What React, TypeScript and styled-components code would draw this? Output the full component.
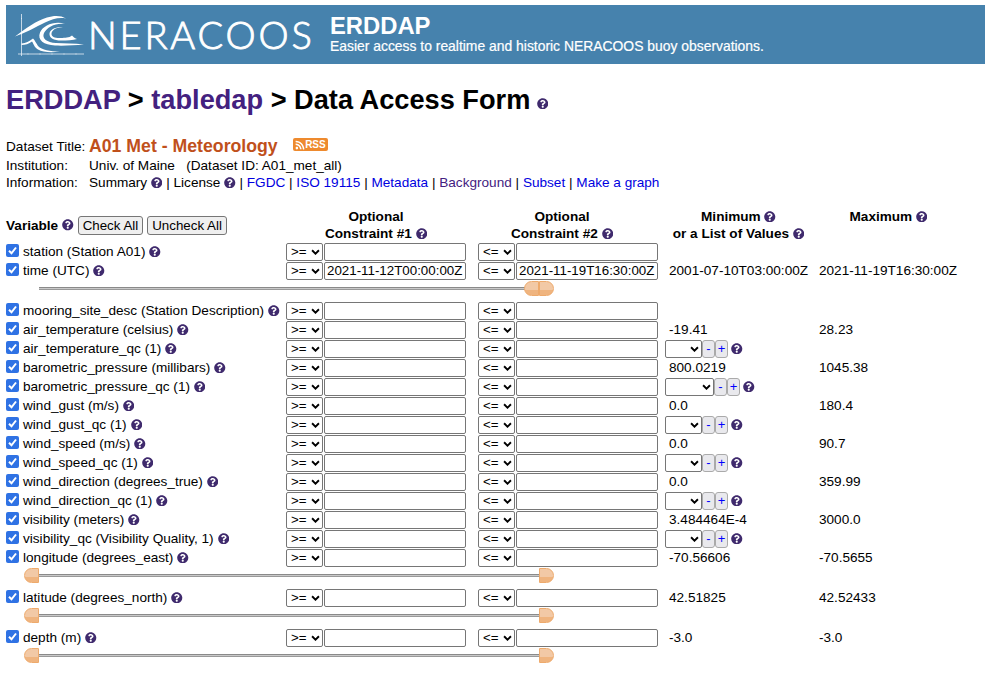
import React from 'react';
import styled, {createGlobalStyle} from 'styled-components';
import {FaQuestionCircle, FaRss} from 'react-icons/fa';

const GlobalStyle = createGlobalStyle`
  body {
    margin: 0;
    background: #fff;
    color: #000;
    font-family: "Liberation Sans", Arial, sans-serif;
    font-size: 13.6px;
  }
`

interface Variable {
    name: string;
    min?: string;
    max?: string;
    first?: string;
    second?: string;
    listWidth?: number;
    slider?: 'full' | 'end';
}

const variables: Variable[] = [
    {name: 'station (Station A01)'},
    {name: 'time (UTC)', min: '2001-07-10T03:00:00Z', max: '2021-11-19T16:30:00Z', first: '2021-11-12T00:00:00Z', second: '2021-11-19T16:30:00Z', slider: 'end'},
    {name: 'mooring_site_desc (Station Description)'},
    {name: 'air_temperature (celsius)', min: '-19.41', max: '28.23'},
    {name: 'air_temperature_qc (1)', listWidth: 37},
    {name: 'barometric_pressure (millibars)', min: '800.0219', max: '1045.38'},
    {name: 'barometric_pressure_qc (1)', listWidth: 49},
    {name: 'wind_gust (m/s)', min: '0.0', max: '180.4'},
    {name: 'wind_gust_qc (1)', listWidth: 37},
    {name: 'wind_speed (m/s)', min: '0.0', max: '90.7'},
    {name: 'wind_speed_qc (1)', listWidth: 37},
    {name: 'wind_direction (degrees_true)', min: '0.0', max: '359.99'},
    {name: 'wind_direction_qc (1)', listWidth: 37},
    {name: 'visibility (meters)', min: '3.484464E-4', max: '3000.0'},
    {name: 'visibility_qc (Visibility Quality, 1)', listWidth: 37},
    {name: 'longitude (degrees_east)', min: '-70.56606', max: '-70.5655', slider: 'full'},
    {name: 'latitude (degrees_north)', min: '42.51825', max: '42.52433', slider: 'full'},
    {name: 'depth (m)', min: '-3.0', max: '-3.0', slider: 'full'},
];

const Help = () => <HelpIcon><FaQuestionCircle/></HelpIcon>;

const Logo = () => (
    <LogoSvg viewBox="0 0 72 46" fill="none">
        <path d="M7.5 1V43M4 41H70" stroke="#e4eef5" strokeWidth="0.8"/>
        <path d="M7 5.5h1M7 21h1M14 40.5v1M26 40.5v1M38 40.5v1M50 40.5v1M62 40.5v1" stroke="#e4eef5" strokeWidth="0.8"/>
        <path d="M1 23.5C12 15 22 8 33 4.5C40 2.3 47 2.3 52 5.5C45 4 38 6 31 9.5C22 14 11 20 1 23.5Z" fill="#fff"/>
        <path d="M51 11C42 9.5 33 14 30 20C27.5 25.5 33 29.5 42 30C50 30.5 60 30 70 31.5C60 32.2 50 33 41 32.5C30 32 23 27 26 19.5C29 12.5 41 7.5 51 11Z" fill="#fff"/>
        <path d="M49 14.5C42 14 38 17 37.500 20.500C37 24 42 25.500 47 25C51 24.600 55 25 58 22.500C59 23.500 60 25 63 26C59 27 53 27.500 47 27.500C40 27.500 35 25 35.500 20.500C36 16.500 42 13.500 49 14.500Z" fill="#fff"/>
        <path d="M7.500 30.500C12 30 15 28.500 19 25.500C21 27.500 22 30 24 33C28 37 36 38.500 46 38.500C38 39.800 29 39.500 24 36.500C20 34 19.500 30.500 18 28.500C15 31 11 32 7.500 32Z" fill="#fff"/>
    </LogoSvg>
);

const RangeSlider = ({end}: {end?: boolean}) => (
    <SliderRow>
        <SliderTrack>
            <Thumb $side="left" $meet={end}/>
            <Thumb $side="right" $meet={end}/>
        </SliderTrack>
    </SliderRow>
);

const Constraint = ({op, value, $last}: {op: string; value?: string; $last?: boolean}) => (
    <ConstraintCell $last={$last}>
        <OpSelect defaultValue={op}>
            <option>{op}</option>
        </OpSelect>
        <ConstraintInput type="text" defaultValue={value ?? ''} readOnly/>
    </ConstraintCell>
);

export default function App() {
    return (
        <Page>
            <GlobalStyle/>
            <Banner>
                <Logo/>
                <BrandName>NERACOOS</BrandName>
                <BannerText>
                    <BannerTitle>ERDDAP</BannerTitle>
                    <BannerTagline>Easier access to realtime and historic NERACOOS buoy observations.</BannerTagline>
                </BannerText>
            </Banner>

            <Heading>
                <VisitedLink>ERDDAP</VisitedLink> &gt; <VisitedLink>tabledap</VisitedLink> &gt; Data Access Form <HeadingHelp><Help/></HeadingHelp>
            </Heading>

            <InfoBlock>
                <TitleLabel>Dataset Title:</TitleLabel>
                <TitleValue>
                    <DatasetTitle>A01 Met - Meteorology</DatasetTitle>
                    <RssBadge><FaRss/>RSS</RssBadge>
                </TitleValue>
                <InfoLabel>Institution:</InfoLabel>
                <InfoValue>Univ. of Maine &nbsp; (Dataset ID: A01_met_all)</InfoValue>
                <InfoLabel>Information:</InfoLabel>
                <InfoValue>
                    Summary <Help/> | License <Help/> | <Link>FGDC</Link> | <Link>ISO 19115</Link> | <Link>Metadata</Link> | <InfoVisited>Background</InfoVisited> | <Link>Subset</Link> | <Link>Make a graph</Link>
                </InfoValue>
            </InfoBlock>

            <HeaderRow>
                <VariableHead>
                    <strong>Variable</strong>
                    <Help/>
                    <ActionButton>Check All</ActionButton>
                    <ActionButton>Uncheck All</ActionButton>
                </VariableHead>
                <HeadCell>Optional<br/>Constraint #1 <Help/></HeadCell>
                <HeadCell>Optional<br/>Constraint #2 <Help/></HeadCell>
                <HeadCell>Minimum <Help/><br/>or a List of Values <Help/></HeadCell>
                <HeadCell>Maximum <Help/><br/>&nbsp;</HeadCell>
            </HeaderRow>

            {variables.map((v) => (
                <React.Fragment key={v.name}>
                    <Row>
                        <VariableCell>
                            <VarCheck type="checkbox" defaultChecked/>
                            <span>{v.name}</span>
                            <Help/>
                        </VariableCell>
                        <Constraint op=">=" value={v.first}/>
                        <Constraint op="<=" value={v.second} $last/>
                        {v.listWidth ? (
                            <ListCell>
                                <ListSelect $width={v.listWidth}><option></option></ListSelect>
                                <StepButton>-</StepButton>
                                <StepButton>+</StepButton>
                                <ListHelp><Help/></ListHelp>
                            </ListCell>
                        ) : (
                            <MinCell>{v.min}</MinCell>
                        )}
                        <MaxCell>{v.max}</MaxCell>
                    </Row>
                    {v.slider && <RangeSlider end={v.slider === 'end'}/>}
                </React.Fragment>
            ))}
        </Page>
    );
}

const Page = styled.div`
  padding: 5px 0 0 6px;
  width: 979px;
  height: 681px;
  overflow: hidden;
`

const Banner = styled.div`
  display: flex;
  align-items: center;
  height: 59px;
  background: #4682ad;
  color: #fff;
`

const LogoSvg = styled.svg`
  width: 72px;
  height: 46px;
  margin: 3px 0 0 8px;
  flex: none;
`

const BrandName = styled.div`
  width: 242px;
  margin-left: 2px;
  font-family: Lato, sans-serif;
  font-weight: 300;
  font-size: 38px;
  letter-spacing: 2.85px;
  -webkit-text-stroke: 0.9px #fff;
  line-height: 59px;
  white-space: nowrap;
`

const BannerText = styled.div`
  display: flex;
  flex-direction: column;
  margin-top: -2px;
`

const BannerTitle = styled.div`
  font-size: 23.800px;
  font-weight: bold;
  line-height: 24px;
`

const BannerTagline = styled.div`
  font-size: 13.900px;
  line-height: 16px;
  -webkit-text-stroke: 0.2px #fff;
`

const Heading = styled.h1`
  margin: 20px 0 0;
  font-size: 27.200px;
  font-weight: bold;
  line-height: 31px;
`

const VisitedLink = styled.span`
  color: #43217f;
`

const HeadingHelp = styled.span`
  font-size: 13px;
  margin-left: -1px;
  position: relative;
  top: -1px;
`

const HelpIcon = styled.span`
  display: inline-flex;
  vertical-align: -1px;
  color: #3f2a6d;
  font-size: 11.500px;
`

const InfoBlock = styled.div`
  display: grid;
  grid-template-columns: 83px auto;
  margin-top: 15px;
  line-height: 17px;
`

const InfoLabel = styled.div`
  white-space: nowrap;
`

const InfoValue = styled.div`
  white-space: nowrap;
`

const TitleLabel = styled(InfoLabel)`
  line-height: 20px;
  padding-top: 2px;
`

const TitleValue = styled.div`
  display: flex;
  align-items: center;
  line-height: 22px;
`

const DatasetTitle = styled.span`
  color: #c0501b;
  font-size: 17.700px;
  font-weight: bold;
`

const RssBadge = styled.span`
  display: inline-flex;
  align-items: center;
  justify-content: space-between;
  width: 35px;
  height: 13px;
  box-sizing: border-box;
  margin: -3px 0 0 15px;
  padding: 0 2px;
  border-radius: 2px;
  background: #ee8a2e;
  color: #fff;
  font-size: 10px;
  font-weight: bold;
`

const Link = styled.span`
  color: #0000e0;
`

const InfoVisited = styled.span`
  color: #43217f;
`

const columns = '280px 180px 192px 161px 139px';

const HeaderRow = styled.div`
  display: grid;
  grid-template-columns: ${columns};
  margin-top: 17px;
  height: 34px;
`

const VariableHead = styled.div`
  display: flex;
  align-items: center;
  gap: 4px;
  white-space: nowrap;
`

const HeadCell = styled.div`
  font-weight: bold;
  text-align: center;
  line-height: 17px;
`

const ActionButton = styled.button`
  height: 19px;
  margin: 0;
  padding: 0 4px;
  border: 1px solid #767676;
  border-radius: 3px;
  background: #efefef;
  color: #000;
  font-family: inherit;
  font-size: 13.330px;
`

const Row = styled.div`
  display: grid;
  grid-template-columns: ${columns};
  height: 19px;
  align-items: center;
`

const VariableCell = styled.div`
  display: flex;
  align-items: center;
  gap: 4px;
  white-space: pre;
`

const VarCheck = styled.input`
  appearance: none;
  width: 13px;
  height: 13px;
  margin: 0 0 2px;
  border-radius: 2px;
  background: #2f72e4 url("data:image/svg+xml,%3Csvg xmlns='http://www.w3.org/2000/svg' viewBox='0 0 13 13'%3E%3Cpath d='M3 6.800l2.500 2.500L10 3.500' fill='none' stroke='white' stroke-width='2'/%3E%3C/svg%3E") center / 13px no-repeat;
`

const ConstraintCell = styled.div<{$last?: boolean}>`
  display: flex;
  gap: 1px;
  padding-left: ${(p) => (p.$last ? '12px' : '0')};
`

const chevron = `url("data:image/svg+xml,%3Csvg xmlns='http://www.w3.org/2000/svg' viewBox='0 0 10 7'%3E%3Cpath d='M1 1.500l4 4 4-4' fill='none' stroke='black' stroke-width='2.200'/%3E%3C/svg%3E")`;

const OpSelect = styled.select`
  appearance: none;
  width: 37px;
  height: 18px;
  padding: 0 0 0 4px;
  border: 1px solid #767676;
  border-radius: 2px;
  background: #fff ${chevron} right 2px center / 9px 6px no-repeat;
  color: #000;
  font-family: inherit;
  font-size: 13.330px;
`

const ConstraintInput = styled.input`
  width: 142px;
  height: 18px;
  box-sizing: border-box;
  padding: 0 2px;
  border: 1px solid #767676;
  border-radius: 2px;
  color: #000;
  font-family: inherit;
  font-size: 13.330px;
`

const MinCell = styled.div`
  padding-left: 11px;
  white-space: nowrap;
`

const MaxCell = styled.div`
  white-space: nowrap;
`

const ListCell = styled.div`
  display: flex;
  align-items: center;
  padding-left: 7px;
`

const ListSelect = styled.select<{$width: number}>`
  appearance: none;
  width: ${(p) => p.$width}px;
  height: 18px;
  border: 1px solid #767676;
  border-radius: 2px;
  background: #fff ${chevron} right 2px center / 9px 6px no-repeat;
`

const StepButton = styled.button`
  width: 13px;
  height: 18px;
  padding: 0;
  border: 1px solid #aaa;
  border-radius: 3px;
  background: #e9e9ed;
  color: #0000ff;
  font-family: inherit;
  font-size: 13px;
`

const ListHelp = styled.span`
  margin-left: 3px;
  display: inline-flex;
`

const SliderRow = styled.div`
  height: 21px;
  padding: 7px 0 0 33px;
  box-sizing: border-box;
`

const SliderTrack = styled.div`
  position: relative;
  width: 500px;
  height: 3px;
  background: linear-gradient(#8a8a8a 0 1px, #c9c9c9 1px 2px, #9a9a9a 2px 3px);
`

const Thumb = styled.div<{$side: 'left' | 'right'; $meet?: boolean}>`
  position: absolute;
  top: -6px;
  width: 15px;
  height: 15px;
  box-sizing: border-box;
  border: 1px solid #eeaa6c;
  background: linear-gradient(#f2c9a6 0 60%, #efb47f 60% 100%);
  ${(p) =>
    p.$side === 'left'
        ? `border-radius: 8px 0 0 8px; ${p.$meet ? 'right: 0;' : 'left: -15px;'}`
        : 'border-radius: 0 8px 8px 0; left: 100%;'}
`
